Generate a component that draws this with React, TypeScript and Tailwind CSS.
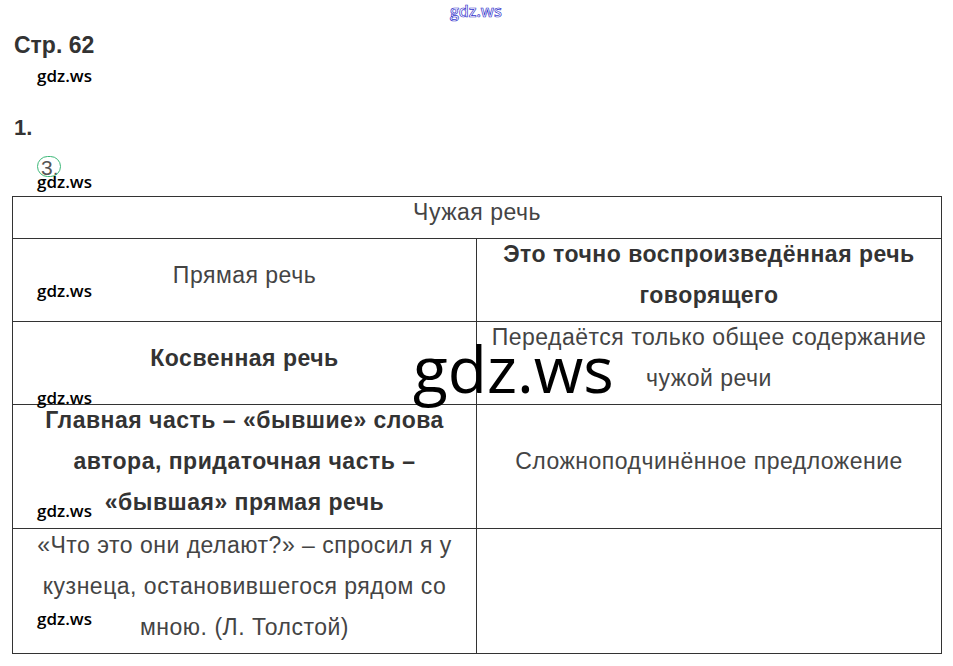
import React from "react";

const sans = "font-['Liberation_Sans',Arial,sans-serif]";
const wm = "font-['Open_Sans',sans-serif]";

function Wm({ top }: { top: string }) {
  return (
    <div className={`absolute left-[37px] ${top} ${wm} text-[17px] font-semibold leading-[20px] text-black`}>gdz.ws</div>
  );
}

function Cell({
  children,
  className = "",
  colSpan,
}: {
  children?: React.ReactNode;
  className?: string;
  colSpan?: number;
}) {
  return (
    <td colSpan={colSpan} className={`border border-[#333] text-center align-middle py-0 leading-[41px] ${className}`}>
      <div className="-translate-y-[5px]">{children}</div>
    </td>
  );
}

export default function App() {
  return (
    <div className={`relative w-[953px] h-[666px] bg-white overflow-hidden ${sans} text-[#444]`}>
      <div className="absolute left-[450px] top-[1px] font-['Open_Sans',sans-serif] text-[16px] font-semibold leading-[20px] text-transparent [-webkit-text-stroke:0.7px_#3333cc]">gdz.ws</div>

      <div className="pt-[31px] pl-[14px]">
        <div className="text-[23px] font-bold leading-[28px] text-[#333]">Стр. 62</div>
        <div className="mt-[55px] text-[22px] font-bold leading-[28px] text-[#333]">1.</div>
        <div className="mt-[12px] ml-[27px] flex items-center h-[28px] text-[21px] leading-[28px] text-[#555]">
          <span className="relative inline-block">
            <span className="absolute left-[-4px] top-[2px] w-[24px] h-[21px] rounded-full border border-[#3cb878]"></span>
            3.
          </span>
        </div>
      </div>

      <table className="mt-[14px] ml-[12px] w-[929px] border-collapse table-fixed text-[23px] tracking-[0.5px]">
        <colgroup>
          <col className="w-[464px]" />
          <col className="w-[465px]" />
        </colgroup>
        <tbody>
          <tr className="h-[42px]">
            <Cell colSpan={2}>Чужая речь</Cell>
          </tr>
          <tr className="h-[83px]">
            <Cell className="px-[8px]">Прямая речь</Cell>
            <Cell className="font-bold text-[#333] px-[4px]">Это точно воспроизведённая речь говорящего</Cell>
          </tr>
          <tr className="h-[83px]">
            <Cell className="font-bold text-[#333] px-[8px]">Косвенная речь</Cell>
            <Cell className="px-[4px]">Передаётся только общее содержание чужой речи</Cell>
          </tr>
          <tr className="h-[124px]">
            <Cell className="font-bold text-[#333] px-[14px]">Главная часть – «бывшие» слова автора, придаточная часть – «бывшая» прямая речь</Cell>
            <Cell className="px-[4px]">Сложноподчинённое предложение</Cell>
          </tr>
          <tr className="h-[125px]">
            <Cell className="px-[14px]">«Что это они делают?» – спросил я у кузнеца, остановившегося рядом со мною. (Л. Толстой)</Cell>
            <Cell />
          </tr>
        </tbody>
      </table>

      <Wm top="top-[66px]" />
      <Wm top="top-[172px]" />
      <Wm top="top-[281px]" />
      <Wm top="top-[388px]" />
      <Wm top="top-[501px]" />
      <Wm top="top-[609px]" />

      <div className={`absolute left-[413px] top-[329px] ${wm} text-[64px] font-medium leading-[80px] text-black`}>gdz.ws</div>
    </div>
  );
}
